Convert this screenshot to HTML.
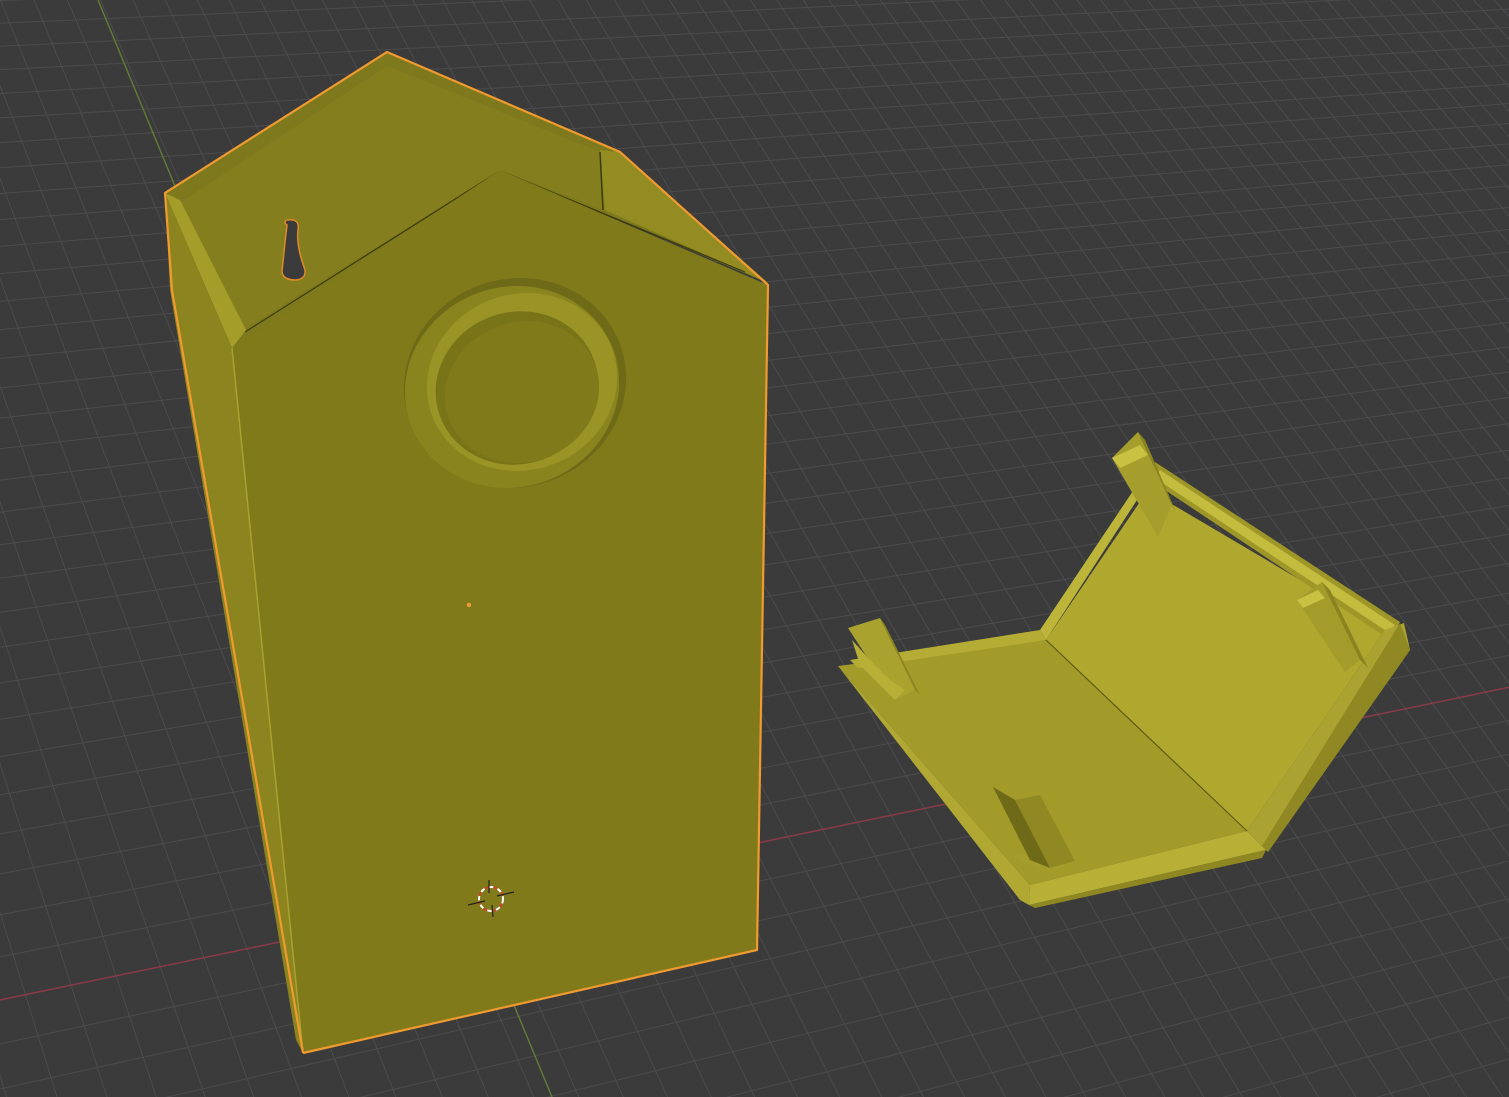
<!DOCTYPE html>
<html><head><meta charset="utf-8"><style>
html,body{margin:0;padding:0;background:#3b3b3c;width:1509px;height:1097px;overflow:hidden}
svg{display:block;overflow:hidden;position:absolute;left:0;top:0}
</style></head><body>
<svg id="s" width="1509" height="1097" viewBox="0 0 1509 1097" xmlns="http://www.w3.org/2000/svg">
<rect width="1509" height="1097" fill="#3b3b3c"/>
<g id="grid" stroke="#4c4c4e" stroke-width="1" fill="none"></g>
<line x1="-10" y1="1002" x2="1520" y2="685" stroke="#8a3a48" stroke-width="1.5"/>
<line x1="98" y1="0" x2="552" y2="1097" stroke="#5e7a38" stroke-width="1.5"/>

<polygon points="165,193 387,52 620,152 768,283 500,170 232,348" fill="#7e791c"/>
<polygon points="180,203 387,66 600,152 605,210 500,170 262,318 240,332" fill="#847e1e"/>
<polygon points="600,150 620,152 768,283 745,272 605,210" fill="#938c22"/>
<line x1="600" y1="152" x2="603" y2="210" stroke="#3d3a0c" stroke-width="1.5"/>
<polygon points="165,193 180,200 246,330 232,348" fill="#a49d2a"/>
<polygon points="232,348 500,170 505,178 250,340" fill="#a59e2c"/>
<line x1="245" y1="332" x2="498" y2="172" stroke="#3d3a0c" stroke-width="1.2"/>
<line x1="503" y1="172" x2="745" y2="272" stroke="#3d3a0c" stroke-width="1.2"/>
<polygon points="165,193 232,348 303,1053 296,1040 170,290" fill="#8b841f"/>
<polygon points="232,348 500,170 768,285 757,950 303,1053" fill="#807a1b"/>
<line x1="232" y1="348" x2="303" y2="1053" stroke="#a9a230" stroke-width="1.5"/>
<path d="M287,225 Q283,222 287,220 Q300,218 298,230 Q296,245 305,270 Q306,279 296,280 Q283,280 282,272 Q284,250 287,225 Z" fill="#3b3b3c" stroke="#e08a2a" stroke-width="1.5"/>
<ellipse cx="515" cy="383" rx="112" ry="104" transform="rotate(-20 515 383)" fill="#6f6a17"/>
<ellipse cx="512" cy="387" rx="108" ry="100" transform="rotate(-20 512 387)" fill="#8a841f"/>
<ellipse cx="522" cy="382" rx="96" ry="88" transform="rotate(-20 522 382)" fill="#9a9326"/>
<ellipse cx="517" cy="388" rx="82" ry="76" transform="rotate(-20 517 388)" fill="#7a7419"/>
<ellipse cx="522" cy="392" rx="78" ry="70" transform="rotate(-20 522 392)" fill="#807a1b"/>
<polyline points="303,1053 757,950 768,285 620,152 387,52 165,193 172,290 303,1053" fill="none" stroke="#f09a30" stroke-width="2.2"/>
<circle cx="469" cy="605" r="2.2" fill="#f09a30"/>
<circle cx="491" cy="899" r="12" fill="none" stroke="#fff" stroke-width="2" stroke-dasharray="5 4"/>
<circle cx="491" cy="899" r="12" fill="none" stroke="#d0402a" stroke-width="2" stroke-dasharray="4 5" stroke-dashoffset="4.5"/>
<line x1="468" y1="905" x2="485" y2="901" stroke="#222" stroke-width="1.2"/>
<line x1="497" y1="896" x2="514" y2="892" stroke="#222" stroke-width="1.2"/>
<line x1="489" y1="880" x2="489" y2="893" stroke="#222" stroke-width="1.2"/>
<line x1="492" y1="905" x2="493" y2="917" stroke="#222" stroke-width="1.2"/>

<polygon points="838,666 1046,640 1247,831 1030,885" fill="#a29b2a"/>
<polygon points="838,666 1030,885 1029,905 1020,900" fill="#b0a832"/>
<polygon points="1030,885 1247,831 1266,850 1029,905" fill="#b8b036"/>
<polygon points="1029,905 1266,850 1262,858 1035,908" fill="#8e8722"/>
<polygon points="850,660 1040,630 1046,640 858,668" fill="#b4ac34"/>
<polygon points="1046,640 1148,490 1385,630 1247,831" fill="#b0a82e"/>
<polygon points="1040,630 1143,476 1150,480 1046,640" fill="#bdb53a"/>
<polygon points="1155,462 1400,622 1390,640 1150,480" fill="#9e9728"/>
<polygon points="1160,470 1395,625 1388,632 1155,478" fill="#c4bc3e"/>
<polygon points="1385,630 1404,623 1410,650 1268,852 1247,831" fill="#aba331"/>
<polygon points="1400,623 1410,650 1268,852 1262,846" fill="#908923"/>
<line x1="1046" y1="640" x2="1247" y2="831" stroke="#5e5a14" stroke-width="1.2"/>
<polygon points="1112,458 1138,432 1172,505 1158,537" fill="#a69e2c"/>
<polygon points="1138,432 1145,440 1176,512 1172,505" fill="#8b8421"/>
<polygon points="1112,458 1140,445 1148,455 1120,468" fill="#c9c142"/>
<polygon points="1297,600 1322,582 1360,660 1345,672" fill="#a39b2a"/>
<polygon points="1322,582 1330,590 1368,668 1360,660" fill="#8a8320"/>
<polygon points="1297,600 1318,590 1325,598 1303,608" fill="#c9c142"/>
<polygon points="1008,855 1048,852 1075,862 1050,872" fill="#a59d2b"/>
<polygon points="1015,800 1040,795 1075,861 1050,868" fill="#8f8823"/>
<polygon points="993,787 1015,800 1050,868 1030,860" fill="#6e6a18"/>
<polygon points="848,628 880,618 915,690 895,700" fill="#aaa22e"/>
<polygon points="880,618 885,625 920,695 915,690" fill="#8d8622"/>
<polygon points="852,640 870,660 890,680 905,690 895,700 860,665" fill="#b7af36"/>
</svg>
<script>
(function(){
var g=document.getElementById('grid');
var a=0.0071,b=0.0094;
function P(u,v){var w=a*u+b*v+1;return [(6000*a*u-1208*b*v+492)/w,(-242*a*u-3000*b*v+898)/w];}
var s='';
for(var u=-60;u<=70;u++){var p=P(u,-25),q=P(u,70);s+='<line x1="'+p[0]+'" y1="'+p[1]+'" x2="'+q[0]+'" y2="'+q[1]+'"/>';}
for(var v=-25;v<=70;v++){var p=P(-60,v),q=P(70,v);s+='<line x1="'+p[0]+'" y1="'+p[1]+'" x2="'+q[0]+'" y2="'+q[1]+'"/>';}
g.innerHTML=s;
})();
</script>
</body></html>
